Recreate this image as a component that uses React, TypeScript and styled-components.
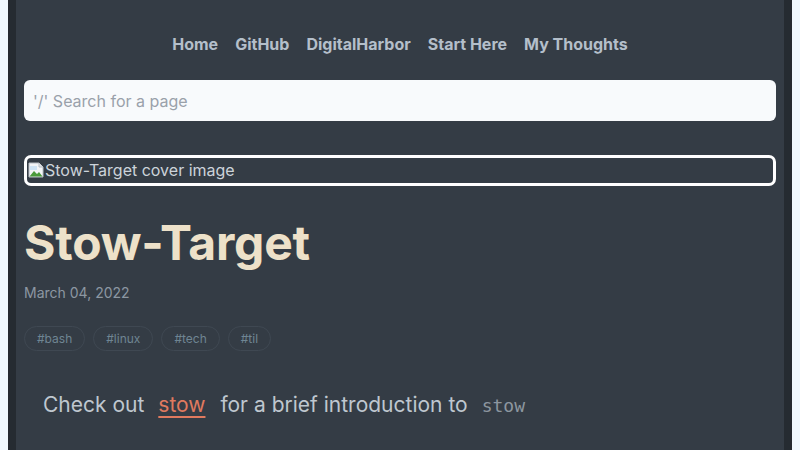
import React from "react";
import styled, { createGlobalStyle } from "styled-components";

const GlobalStyle = createGlobalStyle`
  html, body {
    margin: 0;
    padding: 0;
    background: #f0f9ff;
    font-family: Inter, "Noto Sans", sans-serif;
  }
`;

const Page = styled.div`
  margin: 0 8px;
  height: 450px;
  overflow: hidden;
  background: #343c45;
  border-left: 8px solid #252b31;
  border-right: 8px solid #252b31;
  padding: 0 8px;
`;

const Nav = styled.nav`
  display: flex;
  justify-content: center;
  gap: 17px;
  padding-top: 33px;
  height: 47px;
  box-sizing: border-box;
`;

const NavLink = styled.a`
  font-size: 16px;
  font-weight: 700;
  color: #b4bfca;
  text-decoration: none;
  line-height: 22px;
`;

const Search = styled.input`
  display: block;
  width: 100%;
  box-sizing: border-box;
  height: 41px;
  margin-top: 33px;
  border: none;
  border-radius: 6px;
  background: #f8fafc;
  padding: 0 9px;
  font-family: Inter, sans-serif;
  font-size: 16px;
  color: #333;
  outline: none;

  &::placeholder {
    color: #9aa1aa;
  }
`;

const Cover = styled.div`
  margin-top: 34px;
  height: 31px;
  box-sizing: border-box;
  border: 3px solid #ffffff;
  border-radius: 7px;
  display: flex;
  align-items: center;
  padding-left: 1px;
  padding-bottom: 1px;
  font-size: 16px;
  color: #ccd3da;
`;

const Title = styled.h1`
  margin: 29px 0 0;
  font-size: 48px;
  font-weight: 700;
  line-height: 56px;
  color: #ede1c9;
  letter-spacing: -0.2px;
`;

const Date = styled.div`
  margin-top: 12px;
  font-size: 14px;
  color: #8c97a2;
  line-height: 20px;
`;

const Tags = styled.div`
  display: flex;
  gap: 8px;
  margin-top: 23px;
`;

const Tag = styled.span`
  height: 25px;
  box-sizing: border-box;
  padding: 0 12px;
  border: 1px solid #3f4852;
  border-radius: 13px;
  display: flex;
  align-items: center;
  font-size: 12px;
  color: #6f8593;
`;

const Para = styled.p`
  margin: 40px 0 0;
  padding-left: 19px;
  font-size: 21px;
  line-height: 28px;
  color: #bfc7cf;
`;

const Link = styled.a`
  color: #e07a5f;
  text-decoration: underline;
  text-decoration-thickness: 2px;
  text-underline-offset: 4px;
  margin: 0 9px 0 14px;
`;

const Code = styled.code`
  font-family: "DejaVu Sans Mono", "Liberation Mono", monospace;
  font-size: 18px;
  color: #8c969f;
  margin-left: 14px;
`;

const BrokenIcon = () => (
  <svg width="16" height="16" viewBox="0 0 16 16" style={{ marginRight: 1 }}>
    <path d="M1 1h10l4 4v10H1z" fill="#f3f5f7" stroke="#b8bec5" strokeWidth="1" />
    <path d="M11 1v4h4" fill="#dfe3e7" stroke="#b8bec5" strokeWidth="1" />
    <path d="M1.5 14.5 L6 9 L9 12 L11 10 L14.5 14.5 Z" fill="#4a9a3a" />
    <path d="M2 4h7v4H2z" fill="#cfe4f5" />
  </svg>
);

const links = ["Home", "GitHub", "DigitalHarbor", "Start Here", "My Thoughts"];
const tags = ["#bash", "#linux", "#tech", "#til"];

export default function App() {
  return (
    <>
      <GlobalStyle />
      <Page>
        <Nav>
          {links.map((l) => (
            <NavLink key={l} href="#">
              {l}
            </NavLink>
          ))}
        </Nav>
        <Search placeholder="'/' Search for a page" />
        <Cover>
          <BrokenIcon />
          Stow-Target cover image
        </Cover>
        <Title>Stow-Target</Title>
        <Date>March 04, 2022</Date>
        <Tags>
          {tags.map((t) => (
            <Tag key={t}>{t}</Tag>
          ))}
        </Tags>
        <Para>
          Check out<Link href="#">stow</Link> for a brief introduction to<Code>stow</Code>
        </Para>
      </Page>
    </>
  );
}
